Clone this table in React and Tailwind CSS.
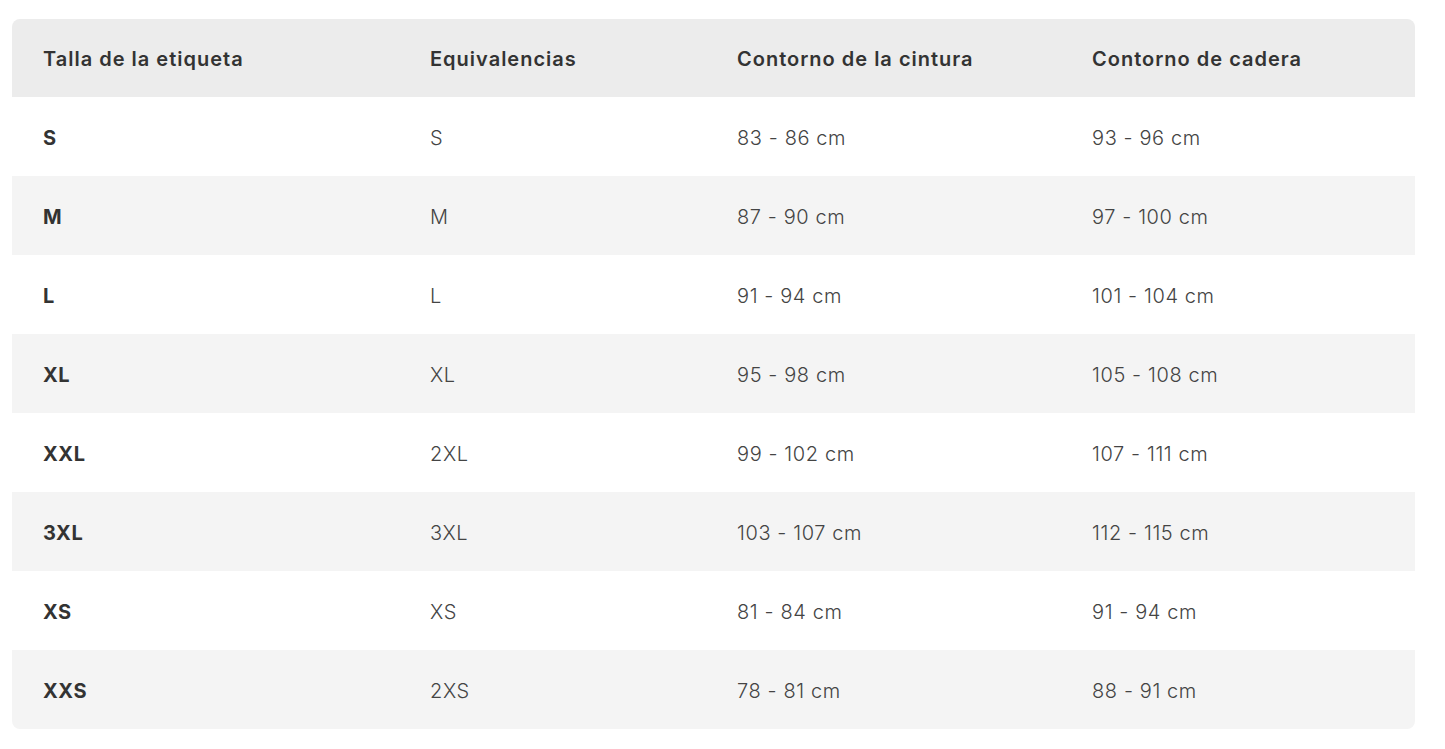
import React from 'react';

const rows = [
  ['S', 'S', '83 - 86 cm', '93 - 96 cm'],
  ['M', 'M', '87 - 90 cm', '97 - 100 cm'],
  ['L', 'L', '91 - 94 cm', '101 - 104 cm'],
  ['XL', 'XL', '95 - 98 cm', '105 - 108 cm'],
  ['XXL', '2XL', '99 - 102 cm', '107 - 111 cm'],
  ['3XL', '3XL', '103 - 107 cm', '112 - 115 cm'],
  ['XS', 'XS', '81 - 84 cm', '91 - 94 cm'],
  ['XXS', '2XS', '78 - 81 cm', '88 - 91 cm'],
];

const headers = ['Talla de la etiqueta', 'Equivalencias', 'Contorno de la cintura', 'Contorno de cadera'];

const cols = 'grid grid-cols-[387px_307px_355px_1fr] items-center';

export default function App() {
  return (
    <div className="min-h-screen bg-white pt-[19px] pl-[12px] pr-[30px] font-['Inter',sans-serif] text-[#333]">
      <div className="w-[1403px] rounded-lg overflow-hidden">
        <div className={`${cols} h-[78px] bg-[#ececec] text-[20px] font-semibold tracking-[0.05em]`}>
          {headers.map((h) => (
            <div key={h} className="px-[31px] pt-[2px]">{h}</div>
          ))}
        </div>
        {rows.map((r, i) => (
          <div
            key={r[0]}
            className={`${cols} h-[79px] text-[20px] tracking-[0.03em] ${i % 2 === 1 ? 'bg-[#f4f4f4]' : 'bg-white'}`}
          >
            <div className="px-[31px] pt-[2px] font-bold">{r[0]}</div>
            <div className="px-[31px] pt-[2px] font-light text-[#444]">{r[1]}</div>
            <div className="px-[31px] pt-[2px] font-light text-[#444]">{r[2]}</div>
            <div className="px-[31px] pt-[2px] font-light text-[#444]">{r[3]}</div>
          </div>
        ))}
      </div>
    </div>
  );
}
